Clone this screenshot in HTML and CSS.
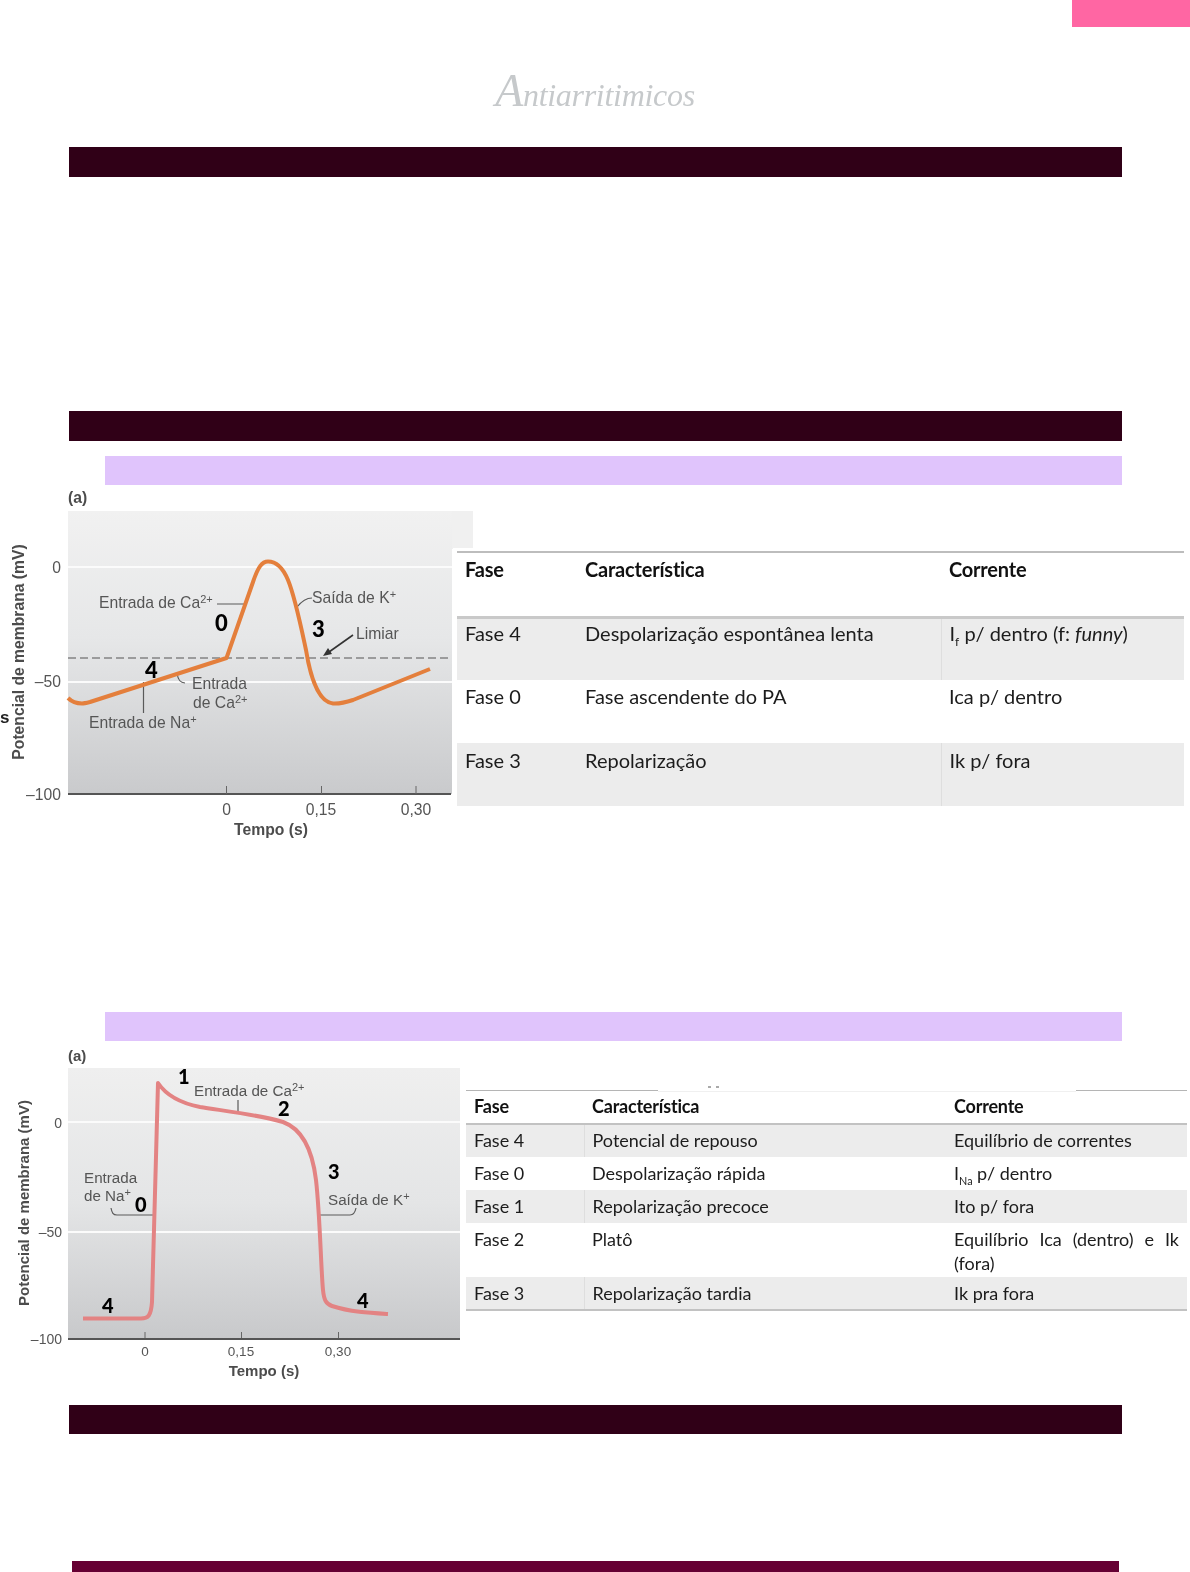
FILE: index.html
```html
<!DOCTYPE html>
<html lang="pt">
<head>
<meta charset="utf-8">
<title>Antiarrítmicos</title>
<link rel="stylesheet" href="styles.css">
</head>
<body>
<div class="page">
  <div class="tab-row"><div class="tab"></div></div>
  <h1 class="title">Antiarritimicos</h1>
  <div class="bar bar-first"></div>
  <div class="bar bar-second"></div>
  <div class="sub sub-first"></div>

  <div class="fig-row fig-row-one">
    <svg class="chart chart-one" viewBox="0 486 473 364" width="473" height="364">
      <defs>
        <linearGradient id="bgA" x1="0" y1="0" x2="0" y2="1">
          <stop offset="0" stop-color="#f1f1f1"/>
          <stop offset="0.45" stop-color="#e6e7e8"/>
          <stop offset="1" stop-color="#c9cacc"/>
        </linearGradient>
      </defs>
      <text class="lb" x="68" y="503">(a)</text>
      <rect x="68" y="511" width="405" height="38" fill="#f0f0f0"/>
      <rect x="68" y="511" width="384" height="283" fill="url(#bgA)"/>
      <line class="wl" x1="68" y1="567" x2="452" y2="567"/>
      <line class="wl" x1="68" y1="682" x2="452" y2="682"/>
      <line class="dash" x1="68" y1="658" x2="452" y2="658"/>
      <line class="axis" x1="68" y1="794" x2="451" y2="794"/>
      <path class="tick" d="M226.500 786V794M321.500 786V794M416 786V794"/>
      <path class="lead" d="M217 604H245M312 598C305 598 301 602 297 607M143.500 682V713M177 673C178 680 180 683 185 683"/>
      <path class="lead-dark" d="M353 635L329 652"/>
      <path class="arrow" d="M323 656L332 654L328 648Z"/>
      <path class="curve-o" d="M68 698C72 702 76 703.500 82 703.500C84 703.500 86 703 90 702L226.500 658L253 582C258 567 262 561.500 268 561.500C276 561.500 283 568 288 580C295 597 300 622 306 650C310 675 318 702 333 703.500C340 704 347 702 353 700L430 669"/>
      <text class="t" x="99" y="608">Entrada de Ca<tspan class="sup" dy="-5">2+</tspan></text>
      <text class="t" x="312" y="603">Saída de K<tspan class="sup" dy="-5">+</tspan></text>
      <text class="t" x="356" y="639">Limiar</text>
      <text class="t" x="192" y="689">Entrada</text>
      <text class="t" x="193" y="708">de Ca<tspan class="sup" dy="-5">2+</tspan></text>
      <text class="t" x="89" y="728">Entrada de Na<tspan class="sup" dy="-5">+</tspan></text>
      <text class="n" x="145" y="678">4</text>
      <text class="n" x="215" y="631">0</text>
      <text class="n" x="312" y="637">3</text>
      <text class="t end" x="61" y="573">0</text>
      <text class="t end" x="61" y="687">–50</text>
      <text class="t end" x="61" y="800">–100</text>
      <text class="t mid" x="226.500" y="815">0</text>
      <text class="t mid" x="321" y="815">0,15</text>
      <text class="t mid" x="416" y="815">0,30</text>
      <text class="lb mid" x="271" y="835">Tempo (s)</text>
      <text class="lb mid" transform="translate(24 652) rotate(-90)">Potencial de membrana (mV)</text>
      <text class="lb cut" x="0" y="723">s</text>
    </svg>
    <div class="tbl-wrap tbl-wrap-one">
      <table class="tbl tbl-one">
        <colgroup><col class="c1"><col class="c2"><col class="c3"></colgroup>
        <thead><tr><th>Fase</th><th>Característica</th><th>Corrente</th></tr></thead>
        <tbody>
          <tr class="alt"><td>Fase 4</td><td>Despolarização espontânea lenta</td><td class="sep">I<sub>f</sub> p/ dentro (f: <i>funny</i>)</td></tr>
          <tr><td>Fase 0</td><td>Fase ascendente do PA</td><td class="sep">Ica p/ dentro</td></tr>
          <tr class="alt"><td>Fase 3</td><td>Repolarização</td><td class="sep">Ik p/ fora</td></tr>
        </tbody>
      </table>
    </div>
  </div>

  <div class="sub sub-second"></div>

  <div class="fig-row fig-row-two">
    <svg class="chart chart-two" viewBox="0 1041 462 359" width="462" height="359">
      <defs>
        <linearGradient id="bgB" x1="0" y1="0" x2="0" y2="1">
          <stop offset="0" stop-color="#efefef"/>
          <stop offset="0.5" stop-color="#e4e5e6"/>
          <stop offset="1" stop-color="#c8c9cb"/>
        </linearGradient>
      </defs>
      <text class="lb sm" x="68" y="1061">(a)</text>
      <rect x="68" y="1068" width="392" height="270" fill="url(#bgB)"/>
      <line class="wl" x1="68" y1="1122" x2="460" y2="1122"/>
      <line class="wl" x1="68" y1="1232" x2="460" y2="1232"/>
      <line class="axis" x1="68" y1="1339" x2="460" y2="1339"/>
      <path class="tick" d="M145 1332V1338M241.500 1332V1338M338.500 1332V1338"/>
      <path class="lead" d="M238 1100V1112M111 1208C112 1213 113 1215 117 1215H155M318 1215H350C353 1215 355 1213 356 1208"/>
      <path class="curve-r" d="M83 1318.500L141 1318.500C148 1318.500 151 1316 152 1302C153 1260 156 1160 158 1083C166 1095 180 1103 200 1107C225 1111 260 1115 283 1122C305 1130 313 1155 316 1180C320 1215 321 1270 323 1290C324 1300 326 1304 332 1306C350 1312 370 1313 388 1314"/>
      <text class="t sm" x="194" y="1096">Entrada de Ca<tspan class="sup" dy="-5">2+</tspan></text>
      <text class="t sm" x="84" y="1183">Entrada</text>
      <text class="t sm" x="84" y="1201">de Na<tspan class="sup" dy="-5">+</tspan></text>
      <text class="t sm" x="328" y="1205">Saída de K<tspan class="sup" dy="-5">+</tspan></text>
      <text class="n ns" x="178" y="1084">1</text>
      <text class="n ns" x="278" y="1116">2</text>
      <text class="n ns" x="328" y="1179">3</text>
      <text class="n ns" x="135" y="1212">0</text>
      <text class="n ns" x="102" y="1313">4</text>
      <text class="n ns" x="357" y="1308">4</text>
      <text class="t yl end" x="62" y="1128">0</text>
      <text class="t yl end" x="62" y="1237">–50</text>
      <text class="t yl end" x="62" y="1344">–100</text>
      <text class="t xs mid" x="145" y="1356">0</text>
      <text class="t xs mid" x="241" y="1356">0,15</text>
      <text class="t xs mid" x="338" y="1356">0,30</text>
      <text class="lb sm mid" x="264" y="1376">Tempo (s)</text>
      <text class="lb sm mid" transform="translate(29 1203) rotate(-90)">Potencial de membrana (mV)</text>
    </svg>
    <div class="tbl-wrap tbl-wrap-two">
      <div class="rule-gap"><span class="rule-mark"></span></div>
      <table class="tbl tbl-two">
        <colgroup><col class="c1"><col class="c2"><col class="c3"></colgroup>
        <thead><tr><th>Fase</th><th>Característica</th><th>Corrente</th></tr></thead>
        <tbody>
          <tr class="alt"><td>Fase 4</td><td class="sep">Potencial de repouso</td><td>Equilíbrio de correntes</td></tr>
          <tr><td>Fase 0</td><td class="sep">Despolarização rápida</td><td>I<sub>Na</sub> p/ dentro</td></tr>
          <tr class="alt"><td>Fase 1</td><td class="sep">Repolarização precoce</td><td>Ito p/ fora</td></tr>
          <tr class="tall"><td>Fase 2</td><td class="sep">Platô</td><td class="just">Equilíbrio Ica (dentro) e Ik (fora)</td></tr>
          <tr class="alt"><td>Fase 3</td><td class="sep">Repolarização tardia</td><td>Ik pra fora</td></tr>
        </tbody>
      </table>
    </div>
  </div>

  <div class="bar bar-third"></div>
  <div class="bar-last"></div>
</div>
</body>
</html>
```
FILE: styles.css
```css
* { box-sizing: border-box; }
html, body { margin: 0; padding: 0; background: #fff; }
.page { width: 1190px; height: 1572px; overflow: hidden; display: flex; flex-direction: column; }

.tab-row { display: flex; justify-content: flex-end; }
.tab { width: 118px; height: 27px; background: #ff66a3; }

.title {
  margin: 40px 0 0 0;
  height: 49px;
  text-align: center;
  font: italic 400 32px/48px "Liberation Serif", serif;
  letter-spacing: -0.3px;
  color: #c6c9cb;
  filter: blur(0.5px);
}
.title::first-letter { font-size: 46px; }

.bar { margin: 0 68px 0 69px; height: 30px; background: #300017; flex: none; }
.bar-first { margin-top: 31px; }
.bar-second { margin-top: 234px; }
.bar-third { margin-top: 5px; height: 29px; }
.bar-last { margin: 127px 71px 0 72px; height: 11px; background: #660033; flex: none; }

.sub { margin: 0 68px 0 105px; height: 29px; background: #e0c4fc; flex: none; }
.sub-first { margin-top: 15px; }
.sub-second { margin-top: 162px; }

.fig-row { display: flex; align-items: flex-start; flex: none; }
.fig-row-one { margin-top: 1px; height: 364px; }
.fig-row-two { height: 359px; }

.chart { display: block; flex: none; filter: blur(0.45px); }

.wl { stroke: #fbfbfb; stroke-width: 2; }
.dash { stroke: #555; stroke-width: 1.2; stroke-dasharray: 8 4; }
.axis { stroke: #555; stroke-width: 2; }
.tick { stroke: #666; stroke-width: 1; fill: none; }
.lead { stroke: #5a5a5a; stroke-width: 1.2; fill: none; }
.lead-dark { stroke: #333; stroke-width: 1.6; fill: none; }
.arrow { fill: #333; }
.curve-o { stroke: #e47f3c; stroke-width: 4; fill: none; stroke-linejoin: round; }
.curve-r { stroke: #e38383; stroke-width: 4; fill: none; stroke-linejoin: round; }

.t { font: 400 15.700px "Liberation Sans", sans-serif; fill: #555; }
.t.sm { font-size: 15.200px; }
.t.yl { font-size: 14px; }
.t.xs { font-size: 13.500px; }
.sup { font-size: 11px; }
.lb { font: 700 15.700px "Liberation Sans", sans-serif; fill: #4c4c4c; }
.lb.sm { font-size: 15px; }
.lb.cut { fill: #222; font-size: 17px; }
.n { font: 900 22px "Lato", sans-serif; fill: #000; }
.n.ns { font-size: 20px; }
.end { text-anchor: end; }
.mid { text-anchor: middle; }

.tbl-wrap { flex: none; background: #fff; filter: blur(0.35px); position: relative; }
.tbl-wrap-one { width: 737px; margin: 62px 0 0 -20px; padding: 3px 6px 0 4px; }
.tbl-wrap-two { width: 725px; margin: 46px 0 0 0; padding: 3px 0 0 4px; }

.rule-gap { position: absolute; left: 196px; top: -1px; width: 418px; height: 6px; background: #fff; border-bottom: 1px solid #f0f0f0; overflow: hidden; z-index: 1; }
.rule-mark { position: absolute; left: 50px; top: 0; width: 12px; height: 2px; background: linear-gradient(90deg, #aaa 0 3px, transparent 3px 8px, #aaa 8px 11px, transparent 11px); }

.tbl { border-collapse: collapse; table-layout: fixed; width: 100%; font-family: "Lato", sans-serif; color: #1c1c1c; }
.tbl th { text-align: left; font-weight: 700; vertical-align: top; color: #111; letter-spacing: -0.2px; }
.tbl td { font-weight: 400; vertical-align: top; }
.tbl sub { font-size: 0.6em; line-height: 0; }
.tbl .alt td { background: #ececec; }
.tbl .alt .sep { border-left: 1px solid #dedede; }

.tbl-one { font-size: 20px; line-height: 24px; border-top: 2px solid #bdbdbd; }
.tbl-one .c1 { width: 120px; }
.tbl-one .c2 { width: 364px; }
.tbl-one th { height: 65px; padding: 4px 8px 0; border-bottom: 3px solid #c9c9c9; }
.tbl-one td { height: 63px; padding: 4px 8px 0; }
.tbl-one tbody tr:first-child td { padding-top: 2px; }
.tbl-one tbody tr:last-child td { padding-top: 5px; }

.tbl-two { font-size: 18px; line-height: 24px; border-top: 1.5px solid #b5b5b5; border-bottom: 2px solid #c2c2c2; }
.tbl-two .c1 { width: 118px; }
.tbl-two .c2 { width: 362px; }
.tbl-two th { height: 33px; padding: 3px 8px 0; border-bottom: 2px solid #c2c2c2; }
.tbl-two td { height: 33px; padding: 4px 8px 0; }
.tbl-two tbody tr:first-child td { padding-top: 3px; }
.tbl-two .tall td { padding-bottom: 2px; }
.tbl-two .just { text-align: justify; }
```
